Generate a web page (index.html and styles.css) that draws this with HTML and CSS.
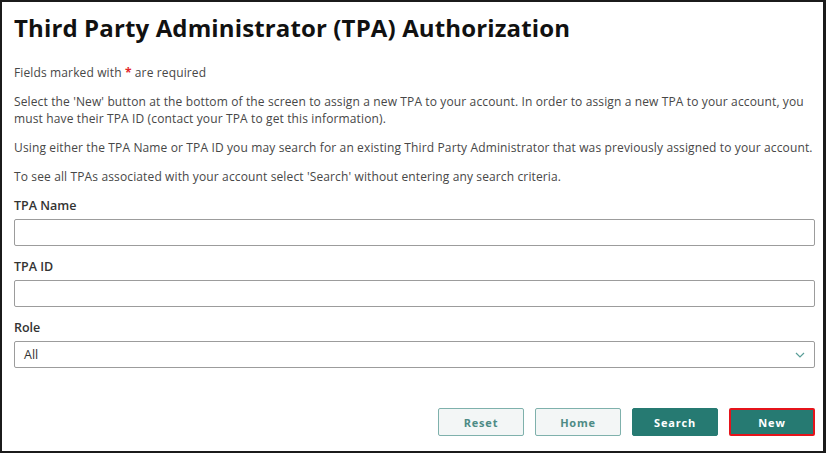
FILE: index.html
```html
<!DOCTYPE html>
<html lang="en">
<head>
<meta charset="utf-8">
<title>Third Party Administrator (TPA) Authorization</title>
<link rel="stylesheet" href="styles.css">
</head>
<body>
<div class="frame">
  <h1 class="title">Third Party Administrator (TPA) Authorization</h1>
  <p class="text">Fields marked with <span class="req">*</span> are required</p>
  <p class="text">Select the 'New' button at the bottom of the screen to assign a new TPA to your account. In order to assign a new TPA to your account, you must have their TPA ID (contact your TPA to get this information).</p>
  <p class="text">Using either the TPA Name or TPA ID you may search for an existing Third Party Administrator that was previously assigned to your account.</p>
  <p class="text">To see all TPAs associated with your account select 'Search' without entering any search criteria.</p>
  <div class="fields">
    <div class="field">
      <label class="label">TPA Name</label>
      <div class="input"></div>
    </div>
    <div class="field">
      <label class="label">TPA ID</label>
      <div class="input"></div>
    </div>
    <div class="field">
      <label class="label">Role</label>
      <div class="input select">
        <span class="select-value">All</span>
        <svg class="chevron" width="10" height="6" viewBox="0 0 10 6"><path d="M1 1 L5 5 L9 1" fill="none" stroke="#5a9e98" stroke-width="1.2"/></svg>
      </div>
    </div>
  </div>
  <div class="actions">
    <button class="btn btn-light">Reset</button>
    <button class="btn btn-light">Home</button>
    <button class="btn btn-dark">Search</button>
    <button class="btn btn-dark btn-focus">New</button>
  </div>
</div>
</body>
</html>
```

FILE: styles.css
```css
html, body {
  margin: 0;
  padding: 0;
  background: #ffffff;
}
.frame {
  box-sizing: border-box;
  width: 826px;
  height: 453px;
  border: 2px solid #1b1b1b;
  border-right-width: 3px;
  padding: 11px 8px 0 12px;
  font-family: "Open Sans", "Liberation Sans", sans-serif;
  color: #474747;
  display: flex;
  flex-direction: column;
}
.title {
  margin: 0 0 21px 0;
  font-size: 24px;
  line-height: 30px;
  font-weight: 700;
  letter-spacing: 0.13px;
  color: #111111;
}
.text {
  margin: 0 0 12px 0;
  font-size: 12px;
  line-height: 17px;
  letter-spacing: 0.13px;
}
.req {
  color: #e3262a;
  font-weight: 700;
}
.fields {
  display: flex;
  flex-direction: column;
  gap: 12px;
}
.field {
  display: flex;
  flex-direction: column;
  gap: 5px;
}
.label {
  font-size: 12.5px;
  line-height: 17px;
  font-weight: 600;
  color: #333333;
}
.input {
  box-sizing: border-box;
  height: 27px;
  border: 1px solid #9c9c9c;
  border-radius: 2px;
  background: #ffffff;
}
.select {
  display: flex;
  align-items: center;
  justify-content: space-between;
  padding: 0 9px 0 9px;
}
.select-value {
  font-size: 12.5px;
  color: #333333;
}
.actions {
  margin-top: 40px;
  display: flex;
  justify-content: flex-end;
  gap: 11px;
}
.btn {
  box-sizing: border-box;
  width: 86px;
  height: 28px;
  border-radius: 2px;
  font-family: "Open Sans", "Liberation Sans", sans-serif;
  font-size: 11px;
  font-weight: 700;
  letter-spacing: 0.8px;
  cursor: pointer;
}
.btn-light {
  background: #f3f6f6;
  border: 1px solid #7fb1ac;
  color: #4d8b85;
}
.btn-dark {
  background: #267a72;
  border: 1px solid #267a72;
  color: #ffffff;
}
.btn-focus {
  border: 2px solid #e5141b;
}
```
